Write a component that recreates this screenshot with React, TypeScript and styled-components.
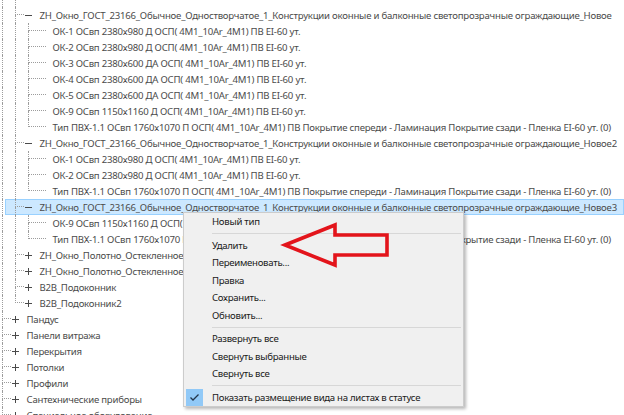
import React from 'react';
import styled, { createGlobalStyle, css } from 'styled-components';

const Global = createGlobalStyle`
  html, body { margin: 0; padding: 0; background: #ffffff; }
  body { font-family: "Noto Sans", "Liberation Sans", sans-serif; overflow: hidden; }
`;

const Screen = styled.div`
  position: relative;
  width: 624px;
  height: 415px;
  overflow: hidden;
  background: #ffffff;
`;

const Tree = styled.div`
  display: flex;
  flex-direction: column;
`;

const Row = styled.div<{ $h?: number; $selected?: boolean }>`
  position: relative;
  display: flex;
  align-items: stretch;
  flex: none;
  height: ${(p) => p.$h ?? 16}px;
  white-space: nowrap;
  font-size: 9.6px;
  letter-spacing: -0.22px;
  color: #4b4b4b;
  ${(p) =>
    p.$selected &&
    css`
      &::before {
        content: '';
        position: absolute;
        left: 5px;
        right: 0;
        top: 0;
        bottom: 0;
        box-sizing: border-box;
        background: #cce8ff;
        border: 1px solid #99d1ff;
      }
    `}
  & > * {
    position: relative;
  }
`;

const Guide = styled.span<{ $line: boolean }>`
  flex: none;
  box-sizing: border-box;
  width: 11px;
  margin-left: 2px;
  border-left: 1px dotted ${(p) => (p.$line ? '#9c9c9c' : 'transparent')};
`;

const Conn = styled.span<{ $w: number }>`
  flex: none;
  width: ${(p) => p.$w}px;
  margin-left: 2px;
  display: flex;
  flex-direction: column;
`;

const ConnTop = styled.span`
  flex: none;
  height: 8px;
  box-sizing: border-box;
  border-left: 1px dotted #9c9c9c;
  border-bottom: 1px dotted #9c9c9c;
`;

const ConnBottom = styled.span<{ $last?: boolean }>`
  flex: 1;
  box-sizing: border-box;
  border-left: 1px dotted ${(p) => (p.$last ? 'transparent' : '#9c9c9c')};
`;

const Expander = styled.span`
  flex: none;
  width: 9px;
  display: flex;
  align-items: center;
  justify-content: center;
`;

const Label = styled.span`
  margin-left: 6.5px;
  padding-top: 1px;
  box-sizing: border-box;
  display: flex;
  align-items: center;
  line-height: 15px;
`;

const Menu = styled.div`
  position: absolute;
  left: 183px;
  top: 212px;
  width: 281px;
  box-sizing: border-box;
  background: #f0f0f0;
  border: 1px solid #cccccc;
  box-shadow: 2px 2px 3px rgba(0, 0, 0, 0.28);
  display: flex;
  flex-direction: column;
  font-size: 9.6px;
  letter-spacing: -0.28px;
  color: #1a1a1a;
`;

const Item = styled.div<{ $checked?: boolean }>`
  flex: none;
  height: 17.5px;
  display: flex;
  align-items: center;
  padding-left: ${(p) => (p.$checked ? 2 : 28)}px;
  white-space: nowrap;
`;

const CheckBox = styled.span`
  flex: none;
  width: 17px;
  height: 17px;
  margin-right: 9px;
  background: #91c9f7;
  display: flex;
  align-items: center;
  justify-content: center;
`;

const Separator = styled.div`
  flex: none;
  height: 1px;
  background: #d7d7d7;
  margin: 2.5px 2px 2.5px 28px;
`;

const Overlay = styled.svg`
  position: absolute;
  left: 0;
  top: 0;
  width: 624px;
  height: 415px;
  pointer-events: none;
`;

type Kind = 'open' | 'closed' | 'leaf';
interface Node {
  level: number;
  label: string;
  kind: Kind;
  last?: boolean;
  selected?: boolean;
}

const OK = (n: string, size: string, t: string) =>
  `ОК-${n} ОСвп ${size} ${t} ОСП( 4М1_10Аr_4М1) ПВ EI-60 ут.`;
const TIP =
  'Тип ПВХ-1.1 ОСвп 1760х1070 П ОСП( 4М1_10Аr_4М1) ПВ Покрытие спереди - Ламинация Покрытие сзади - Пленка EI-60 ут. (0)';
const ZH = 'ZH_Окно_ГОСТ_23166_Обычное_Одностворчатое_1_Конструкции оконные и балконные светопрозрачные ограждающие_Новое';

const nodes: Node[] = [
  { level: 1, label: ZH, kind: 'open' },
  { level: 2, label: OK('1', '2380х980', 'Д'), kind: 'leaf' },
  { level: 2, label: OK('2', '2380х980', 'Д'), kind: 'leaf' },
  { level: 2, label: OK('3', '2380х600', 'ДА'), kind: 'leaf' },
  { level: 2, label: OK('4', '2380х600', 'ДА'), kind: 'leaf' },
  { level: 2, label: OK('5', '2380х600', 'ДА'), kind: 'leaf' },
  { level: 2, label: OK('9', '1150х1160', 'Д'), kind: 'leaf' },
  { level: 2, label: TIP, kind: 'leaf', last: true },
  { level: 1, label: ZH + '2', kind: 'open' },
  { level: 2, label: OK('1', '2380х980', 'Д'), kind: 'leaf' },
  { level: 2, label: OK('2', '2380х980', 'Д'), kind: 'leaf' },
  { level: 2, label: TIP, kind: 'leaf', last: true },
  { level: 1, label: ZH + '3', kind: 'open', selected: true },
  { level: 2, label: OK('9', '1150х1160', 'Д'), kind: 'leaf' },
  { level: 2, label: TIP, kind: 'leaf', last: true },
  { level: 1, label: 'ZH_Окно_Полотно_Остекленное_Двупольное', kind: 'closed' },
  { level: 1, label: 'ZH_Окно_Полотно_Остекленное_Однопольное', kind: 'closed' },
  { level: 1, label: 'B2B_Подоконник', kind: 'closed' },
  { level: 1, label: 'B2B_Подоконник2', kind: 'closed', last: true },
  { level: 0, label: 'Пандус', kind: 'closed' },
  { level: 0, label: 'Панели витража', kind: 'closed' },
  { level: 0, label: 'Перекрытия', kind: 'closed' },
  { level: 0, label: 'Потолки', kind: 'closed' },
  { level: 0, label: 'Профили', kind: 'closed' },
  { level: 0, label: 'Сантехнические приборы', kind: 'closed' },
  { level: 0, label: 'Специальное оборудование', kind: 'closed' },
];

const Sign: React.FC<{ plus: boolean }> = ({ plus }) => (
  <svg width="9" height="9" viewBox="0 0 9 9" shapeRendering="crispEdges">
    <line x1="1" y1="4.5" x2="8" y2="4.5" stroke="#4a4a4a" strokeWidth="1" />
    {plus && <line x1="4.5" y1="1" x2="4.5" y2="8" stroke="#4a4a4a" strokeWidth="1" />}
  </svg>
);

const TreeRow: React.FC<{ node: Node }> = ({ node }) => {
  const guides: boolean[] = [];
  for (let k = 0; k < node.level; k++) guides.push(true);
  return (
    <Row $selected={node.selected}>
      {guides.map((g, i) => (
        <Guide key={i} $line={g} />
      ))}
      <Conn $w={node.kind === 'leaf' ? 18 : 9}>
        <ConnTop />
        <ConnBottom $last={node.last} />
      </Conn>
      {node.kind !== 'leaf' && (
        <Expander>
          <Sign plus={node.kind === 'closed'} />
        </Expander>
      )}
      <Label>{node.label}</Label>
    </Row>
  );
};

const menuTop = ['Новый тип'];
const menuMid = ['Удалить', 'Переименовать...', 'Правка', 'Сохранить...', 'Обновить...'];
const menuTree = ['Развернуть все', 'Свернуть выбранные', 'Свернуть все'];

export default function App() {
  return (
    <Screen>
      <Global />
      <Tree>
        <Row $h={7}>
          <Guide $line />
          <Guide $line />
        </Row>
        {nodes.map((n, i) => (
          <TreeRow key={i} node={n} />
        ))}
      </Tree>
      <Menu>
        {menuTop.map((t) => (
          <Item key={t}>{t}</Item>
        ))}
        <Separator />
        {menuMid.map((t) => (
          <Item key={t}>{t}</Item>
        ))}
        <Separator />
        {menuTree.map((t) => (
          <Item key={t}>{t}</Item>
        ))}
        <Separator />
        <Item $checked>
          <CheckBox>
            <svg width="11" height="9" viewBox="0 0 11 9">
              <polyline points="1.5,4.5 4,7 9.5,1.5" fill="none" stroke="#22344a" strokeWidth="1.3" />
            </svg>
          </CheckBox>
          Показать размещение вида на листах в статусе
        </Item>
      </Menu>
      <Overlay viewBox="0 0 624 415">
        <polygon
          points="285,245 335,225 335,235 387,235 387,255 335,255 335,265"
          fill="none"
          stroke="#e3141b"
          strokeWidth="3.6"
          strokeLinejoin="miter"
        />
      </Overlay>
    </Screen>
  );
}
